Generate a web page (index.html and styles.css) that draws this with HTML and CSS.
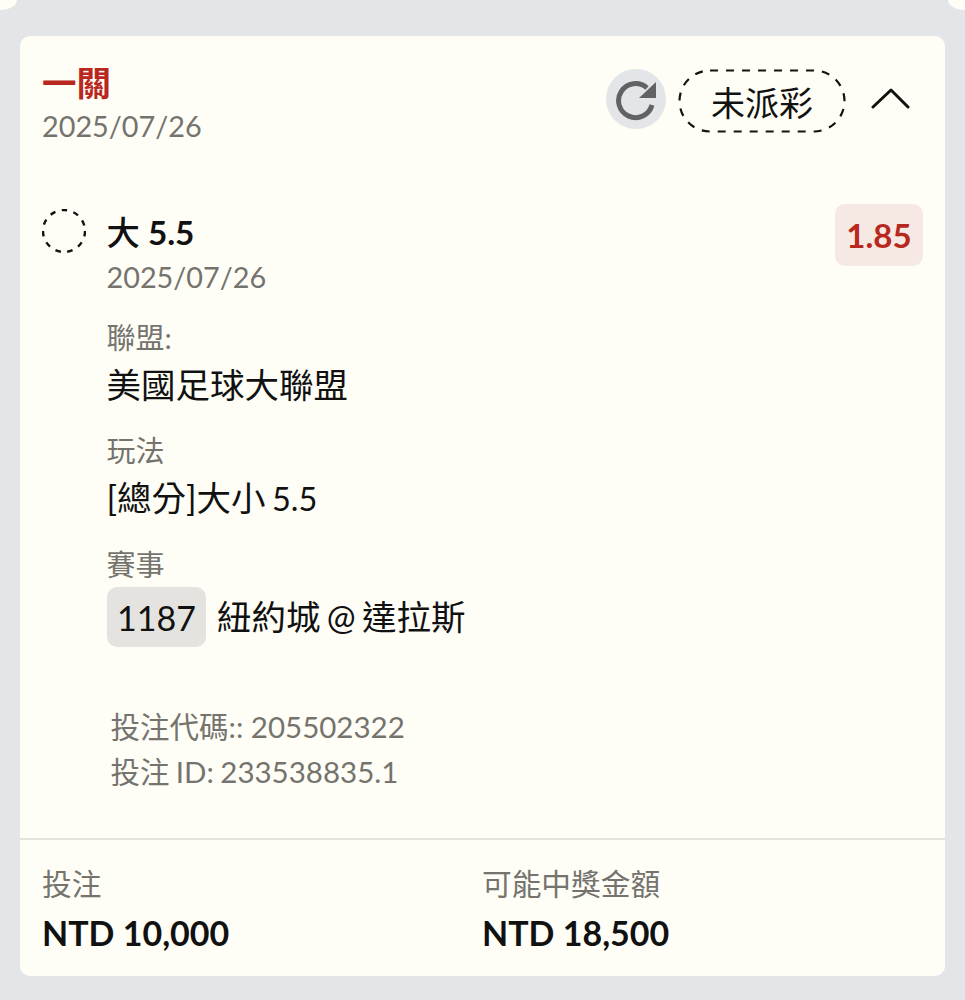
FILE: index.html
```html
<!DOCTYPE html>
<html lang="zh-Hant">

<head>
    <meta charset="UTF-8">
    <meta name="viewport" content="width=device-width, initial-scale=1.0">
    <title>投注紀錄</title>
    <link rel="stylesheet" href="styles.css">
</head>

<body>
    <!-- Bottom corners of the cards scrolled out above -->
    <div class="top-strip">
        <span class="corner corner-left"></span>
        <span class="corner corner-right"></span>
    </div>

    <div class="card">
        <div class="card-header">
            <div>
                <div class="bet-type">一關</div>
                <div class="muted date">2025/07/26</div>
            </div>
            <div class="header-actions">
                <span class="refresh">
                    <svg width="44" height="44" viewBox="0 0 44 44" fill="none">
                        <path d="M33 11A17 17 0 1 0 38 28" stroke="#606265" stroke-width="5" />
                        <path d="M42 5v16H25z" fill="#606265" />
                    </svg>
                </span>
                <span class="status">
                    <svg class="status-border" width="168" height="64" viewBox="0 0 168 64" fill="none">
                        <rect x="1.5" y="1.5" width="165" height="61" rx="30.5" stroke="#111" stroke-width="2.2"
                            stroke-dasharray="8 8" />
                    </svg>
                    未派彩
                </span>
                <svg class="chevron" width="40" height="22" viewBox="0 0 40 22" fill="none">
                    <path d="M2 20L20 3l17 17" stroke="#111" stroke-width="3" stroke-linecap="round"
                        stroke-linejoin="round" />
                </svg>
            </div>
        </div>

        <div class="selection">
            <svg class="pending" width="44" height="44" viewBox="0 0 44 44" fill="none">
                <circle cx="22" cy="22" r="21" stroke="#111" stroke-width="2.4" stroke-dasharray="5.5 6.5" />
            </svg>
            <div class="selection-body">
                <div class="selection-top">
                    <div>
                        <div class="pick"><span class="pick-cjk">大</span> 5.5</div>
                        <div class="muted date">2025/07/26</div>
                    </div>
                    <span class="odds">1.85</span>
                </div>

                <div class="field">
                    <div class="muted">聯盟:</div>
                    <div class="value">美國足球大聯盟</div>
                </div>
                <div class="field">
                    <div class="muted">玩法</div>
                    <div class="value tight">[總分]大小 <span class="latin">5.5</span></div>
                </div>
                <div class="field">
                    <div class="muted">賽事</div>
                    <div class="match">
                        <span class="match-no">1187</span>
                        <span class="value tight">紐約城 @ 達拉斯</span>
                    </div>
                </div>
            </div>
        </div>

        <div class="codes">
            <div class="muted">投注代碼:: 205502322</div>
            <div class="muted code-id">投注 ID: 233538835.1</div>
        </div>

        <div class="card-footer">
            <div>
                <div class="muted footer-label">投注</div>
                <div class="amount">NTD 10,000</div>
            </div>
            <div>
                <div class="muted footer-label">可能中獎金額</div>
                <div class="amount">NTD 18,500</div>
            </div>
        </div>
    </div>
</body>

</html>
```

FILE: styles.css
```css
* {
    box-sizing: border-box;
}

body {
    font-family: Lato, "Noto Sans CJK TC", sans-serif;
    background-color: #e3e5e8;
    color: #111;
    margin: 0;
    padding: 0;
}

.top-strip {
    display: flex;
    justify-content: space-between;
    height: 10px;
}

.corner {
    width: 17px;
    background-color: #fffef6;
}

.corner-left {
    border-bottom-right-radius: 17px 10px;
}

.corner-right {
    border-bottom-left-radius: 17px 10px;
}

.card {
    margin: 26px 20px 0;
    height: 940px;
    background-color: #fffef6;
    border-radius: 10px;
    display: flex;
    flex-direction: column;
}

.muted {
    color: #74736e;
    font-size: 29px;
    line-height: 46px;
}

.date {
    font-size: 28.8px;
}

.card-header {
    display: flex;
    justify-content: space-between;
    padding: 27px 34px 0 22px;
    height: 163px;
}

.bet-type {
    color: #b8281f;
    font-size: 34.5px;
    font-weight: 700;
    line-height: 40px;
}

.header-actions {
    display: flex;
    align-items: flex-start;
    margin-top: 6px;
}

.refresh {
    width: 60px;
    height: 60px;
    border-radius: 50%;
    background-color: #e3e5e8;
    display: flex;
    align-items: center;
    justify-content: center;
    margin-right: 12px;
}

.status {
    position: relative;
    width: 168px;
    height: 64px;
    font-size: 34px;
    display: flex;
    align-items: center;
    justify-content: center;
    margin-right: 25px;
}

.status-border {
    position: absolute;
    top: 0;
    left: 0;
}

.chevron {
    margin-top: 18px;
}

.selection {
    display: flex;
    padding: 0 22px;
    gap: 20.5px;
}

.pending {
    flex-shrink: 0;
    margin-top: 10px;
}

.selection-body {
    flex: 1;
}

.selection-top {
    display: flex;
    justify-content: space-between;
    align-items: flex-start;
    margin-top: 5px;
    margin-bottom: 15px;
}

.pick {
    font-size: 33.3px;
    font-weight: 700;
    line-height: 50px;
    padding-top: 3px;
    height: 50px;
}

.pick-cjk {
    font-weight: 500;
}

.odds {
    background-color: #f6e8e2;
    color: #b8281f;
    font-size: 33px;
    font-weight: 700;
    width: 88px;
    height: 62px;
    border-radius: 10px;
    display: flex;
    align-items: center;
    justify-content: center;
}

.field {
    margin-bottom: 20px;
}

.value {
    font-size: 34.5px;
    line-height: 47px;
}

.tight {
    word-spacing: -2.5px;
}

.latin {
    font-size: 32.5px;
}

.match {
    display: flex;
    align-items: center;
    gap: 11px;
    margin: -1px 0 0 0.5px;
}

.match .value {
    line-height: 52px;
}

.match-no {
    width: 99px;
    height: 60px;
    background-color: #e4e3df;
    border-radius: 10px;
    font-size: 34px;
    display: flex;
    align-items: center;
    justify-content: center;
}

.codes {
    padding: 37px 0 0 90.5px;
}

.codes .muted {
    font-size: 29.5px;
    line-height: 45px;
}

.codes .code-id {
    word-spacing: -1.2px;
}

.card-footer {
    margin-top: auto;
    border-top: 2px solid #e4e3df;
    height: 138px;
    padding: 21px 22px 0;
    display: grid;
    grid-template-columns: 440px 1fr;
}

.footer-label {
    font-size: 29.7px;
}

.amount {
    font-size: 34px;
    font-weight: 700;
    line-height: 52px;
}
```
